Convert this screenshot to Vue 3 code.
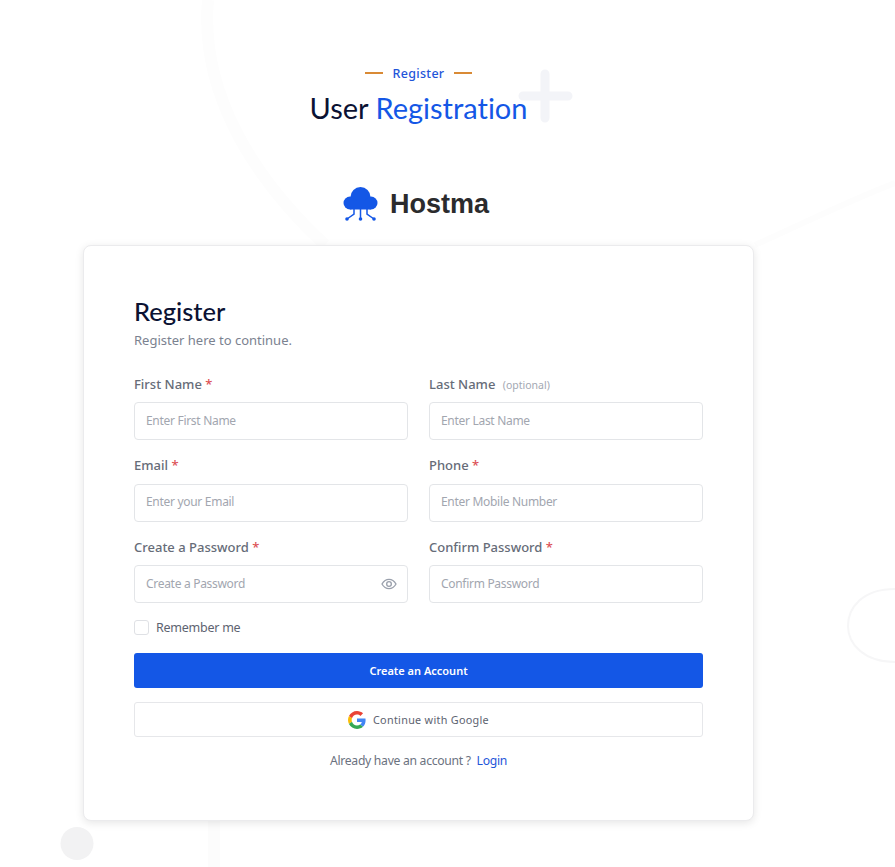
<template>
  <div class="page">
    <svg class="bg-art" width="895" height="867" viewBox="0 0 895 867" fill="none" aria-hidden="true">
      <path d="M208 0C200 90 250 175 325 245" stroke="#fdfdfd" stroke-width="12" />
      <path d="M755 245C800 225 850 200 895 183" stroke="#fdfdfd" stroke-width="6" />
      <path d="M895 589C862 589 848 608 848 626S864 662 895 662" stroke="#f6f6f7" stroke-width="2" />
      <path d="M214 821V867" stroke="#fcfcfc" stroke-width="12" />
      <circle cx="77" cy="843.500" r="16.500" fill="#f2f2f3" />
      <path d="M545 74V118M523 96H568" stroke="#f3f4f8" stroke-width="9" stroke-linecap="round" />
    </svg>

    <header class="head">
      <div class="eyebrow">
        <span class="dash"></span>
        <span>Register</span>
        <span class="dash"></span>
      </div>
      <h1 class="title">User <span>Registration</span></h1>
    </header>

    <div class="brand">
      <svg width="36" height="35" viewBox="0 0 36 35" aria-hidden="true">
        <g fill="#1457e6">
          <circle cx="17.500" cy="10" r="10" />
          <circle cx="7" cy="16" r="6.500" />
          <circle cx="28" cy="16" r="6.500" />
          <rect x="7" y="14" width="21" height="8.500" />
          <circle cx="4" cy="32" r="1.800" />
          <circle cx="17.500" cy="32" r="1.800" />
          <circle cx="31" cy="32" r="1.800" />
        </g>
        <path d="M11 22v5l-7 5M17.500 22v10M24 22v5l7 5" stroke="#1457e6" stroke-width="1.500" fill="none" />
      </svg>
      <span class="brand-name">Hostma</span>
    </div>

    <main class="card">
      <h2 class="card-title">Register</h2>
      <p class="card-sub">Register here to continue.</p>

      <form class="fields" @submit.prevent>
        <div v-for="field in fields" :key="field.label" class="field">
          <label class="label">
            {{ field.label }}
            <span v-if="field.required" class="req">*</span>
            <span v-else class="opt">(optional)</span>
          </label>
          <div class="input-box">
            <input class="input" type="text" :placeholder="field.placeholder">
            <svg v-if="field.eye" class="eye" width="16" height="16" viewBox="0 0 24 24" fill="none" stroke="#9aa0ac" stroke-width="2">
              <path d="M1.500 12S5.500 5 12 5s10.500 7 10.500 7-4 7-10.500 7S1.500 12 1.500 12Z" />
              <circle cx="12" cy="12" r="3.500" />
            </svg>
          </div>
        </div>
      </form>

      <label class="remember">
        <span class="check"></span>
        <span>Remember me</span>
      </label>

      <button class="btn-primary" type="button">Create an Account</button>
      <button class="btn-google" type="button">
        <svg width="18" height="18" viewBox="0 0 48 48" aria-hidden="true">
          <path fill="#EA4335" d="M24 9.500c3.500 0 6.700 1.200 9.200 3.600l6.900-6.900C35.900 2.400 30.400 0 24 0 14.600 0 6.500 5.400 2.600 13.200l8 6.200C12.500 13.600 17.800 9.500 24 9.500z" />
          <path fill="#4285F4" d="M46.900 24.500c0-1.600-.1-3.100-.4-4.500H24v9h12.900c-.6 3-2.200 5.500-4.700 7.200l7.700 6c4.500-4.200 7-10.300 7-17.700z" />
          <path fill="#FBBC05" d="M10.600 28.600c-.5-1.400-.8-3-.8-4.600s.3-3.100.8-4.600l-8-6.200C.9 16.500 0 20.100 0 24s.9 7.500 2.600 10.800l8-6.200z" />
          <path fill="#34A853" d="M24 48c6.500 0 11.900-2.100 15.900-5.800l-7.700-6c-2.200 1.400-4.900 2.300-8.200 2.300-6.200 0-11.500-4.200-13.400-9.900l-8 6.200C6.500 42.600 14.600 48 24 48z" />
        </svg>
        <span>Continue with Google</span>
      </button>

      <p class="foot">Already have an account ? <a href="#" @click.prevent>Login</a></p>
    </main>
  </div>
</template>

<script setup>
const fields = [
  { label: 'First Name', placeholder: 'Enter First Name', required: true },
  { label: 'Last Name', placeholder: 'Enter Last Name' },
  { label: 'Email', placeholder: 'Enter your Email', required: true },
  { label: 'Phone', placeholder: 'Enter Mobile Number', required: true },
  { label: 'Create a Password', placeholder: 'Create a Password', required: true, eye: true },
  { label: 'Confirm Password', placeholder: 'Confirm Password', required: true },
]
</script>

<style>
html, body { background: #fff; }
</style>

<style scoped>
.page {
  position: relative; width: 895px; height: 867px; overflow: hidden;
  background: #fff; font-family: "Noto Sans", sans-serif; color: #6b7280;
  display: flex; flex-direction: column; align-items: center; box-sizing: border-box;
  padding: 63px 58px 0 0;
}
.bg-art { position: absolute; left: 0; top: 0; }
.head, .brand, .card { position: relative; }

.head { display: flex; flex-direction: column; align-items: center; }
.eyebrow {
  display: flex; align-items: center; gap: 10px; height: 20px;
  color: #1f55d9; font-size: 12.500px; font-weight: 500; letter-spacing: 0.300px;
}
.dash { width: 18px; height: 2px; background: #d98a35; }
.title {
  margin: 3px 0 0; font-family: Lato, sans-serif; font-weight: 400; font-variant-ligatures: none;
  font-size: 29px; line-height: 44px; color: #0b1233;
}
.title span { color: #1457e6; }

.brand { display: flex; align-items: center; gap: 11px; margin: 56px 5px 0 0; height: 36px; }
.brand-name { font-family: "Liberation Sans", sans-serif; font-weight: 700; font-size: 27px; color: #2b2b2d; }

.card {
  width: 671px; height: 576px; margin-top: 23px; box-sizing: border-box;
  padding: 49px 50px; background: #fff; border: 1px solid #ebebed; border-radius: 8px;
  box-shadow: 0 2px 8px rgba(0, 0, 0, 0.1);
}
.card-title {
  margin: 0; font-family: Lato, sans-serif; font-weight: 500; font-size: 25.500px;
  line-height: 32px; color: #0b1233;
}
.card-sub { margin: 3px 0 0; font-size: 13px; line-height: 20px; color: #7b8290; }

.fields {
  display: grid; grid-template-columns: 274px 274px; column-gap: 21px; row-gap: 14.500px; margin-top: 23px;
}
.label {
  display: block; height: 18px; margin-bottom: 9.500px; padding-top: 1.500px;
  font-size: 13px; line-height: 18px; font-weight: 500; color: #666c78;
}
.req { color: #dc5055; }
.opt { margin-left: 4px; font-size: 10.500px; font-weight: 400; color: #a3a8b2; }
.input-box { position: relative; }
.input {
  display: block; width: 100%; height: 38px; box-sizing: border-box; padding: 0 11px 2px;
  border: 1px solid #e3e5e8; border-radius: 4px; outline: none;
  font-family: "Noto Sans", sans-serif; font-size: 12px; letter-spacing: -0.300px; color: #333; background: #fff;
}
.input::placeholder { color: #a2a6af; opacity: 1; }
.eye { position: absolute; right: 11px; top: 11px; }

.remember { display: flex; align-items: center; gap: 7px; margin-top: 14px; height: 20px; font-size: 12.500px; letter-spacing: -0.250px; color: #5d6370; }
.check { width: 13px; height: 13px; border: 1px solid #dfe1e5; border-radius: 3px; }

.btn-primary, .btn-google {
  display: flex; align-items: center; justify-content: center; width: 100%; box-sizing: border-box;
  border-radius: 3px; font-family: "Noto Sans", sans-serif; cursor: pointer;
}
.btn-primary {
  height: 35px; margin-top: 16px; border: 0; background: #1457e6; color: #fff;
  font-size: 11px; font-weight: 600;
}
.btn-google {
  gap: 7px; height: 35px; margin-top: 14px; border: 1px solid #e6e7ea; background: #fff;
  color: #5d6370; font-size: 10.800px; font-weight: 400; letter-spacing: 0.300px;
}
.foot { margin: 15px 0 0; text-align: center; font-size: 12.200px; line-height: 18px; letter-spacing: -0.300px; color: #6b7280; }
.foot a { margin-left: 3px; color: #1f55d9; text-decoration: none; }
</style>
